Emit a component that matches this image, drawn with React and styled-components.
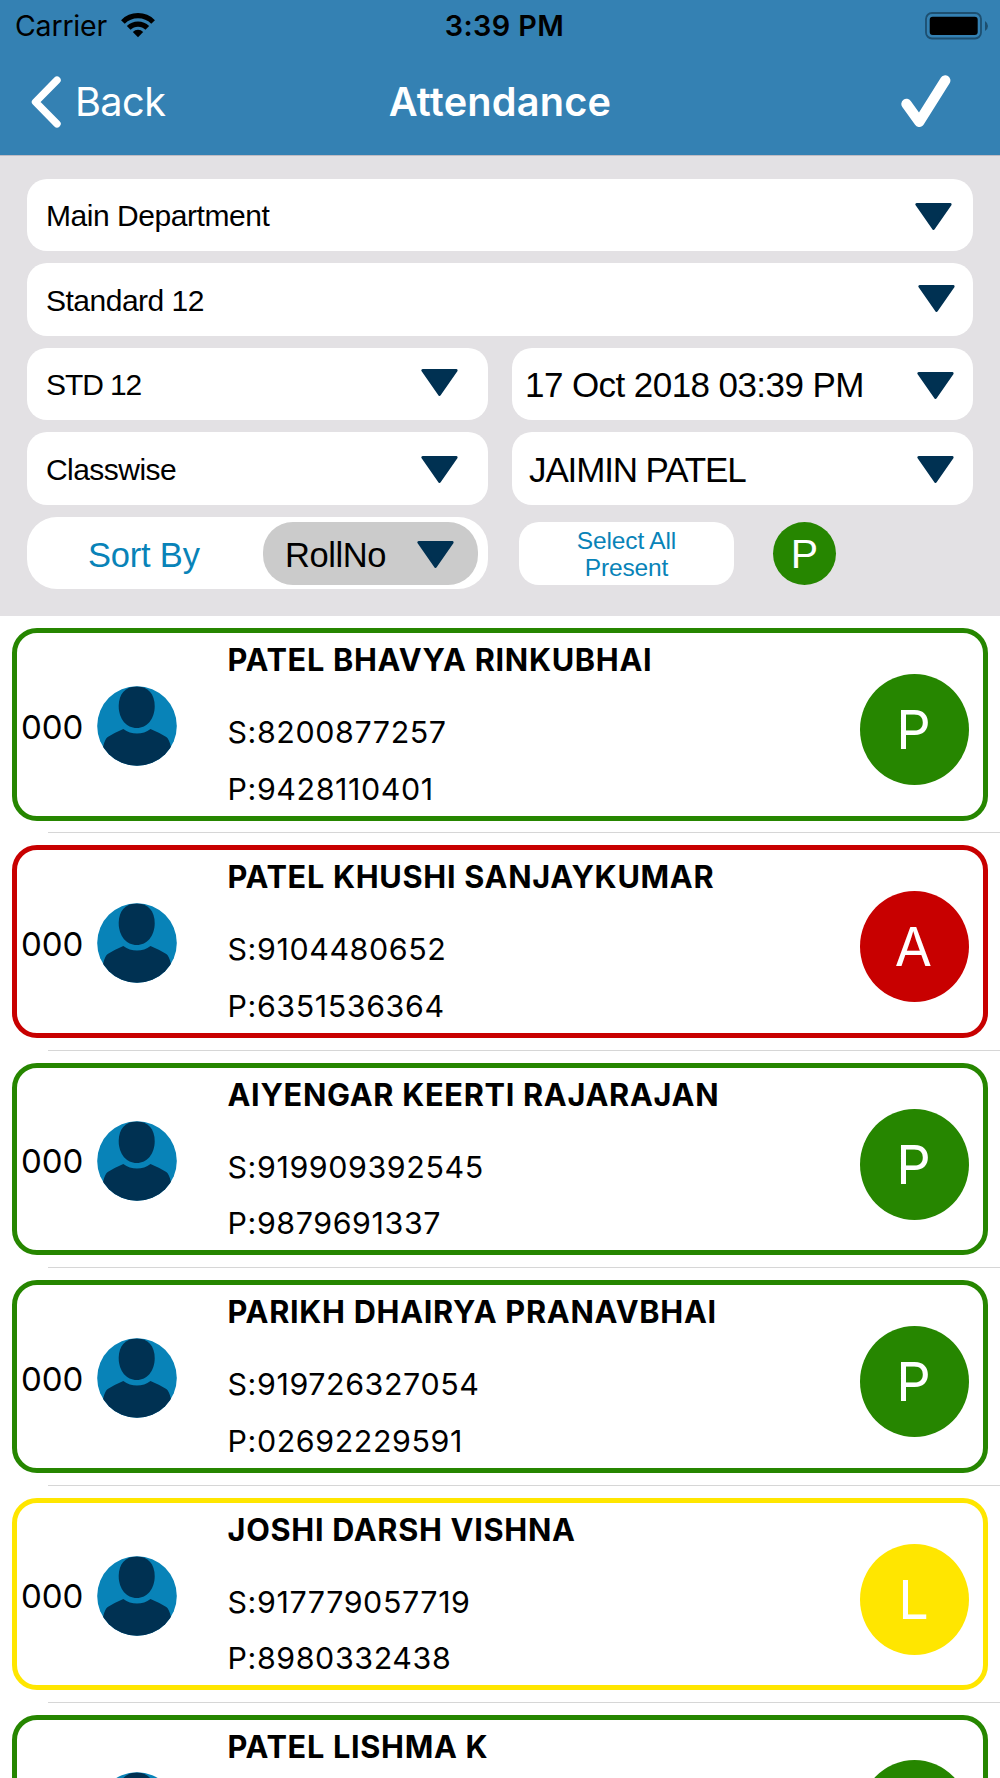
import React from "react";
import styled, { createGlobalStyle } from "styled-components";

const GREEN = `#268600`;
const RED = `#c80000`;
const YELLOW = `#ffe600`;
const NAVY = `#003152`;
const BLUE = `#0883b8`;

const GlobalStyle = createGlobalStyle`
  body {
    margin: 0;
    background: #fff;
  }

  * {
    box-sizing: border-box;
  }
`;

const Screen = styled.div`
  width: 1000px;
  height: 1778px;
  overflow: hidden;
  color: #000;
  background: #fff;
  font-family: Inter, sans-serif;
`;

const Header = styled.header`
  height: 156px;
  background: #3481b3;
  border-bottom: 1px solid #bfbcc4;
`;

const StatusBar = styled.div`
  height: 50px;
  padding: 0 12px 0 15px;
  display: grid;
  grid-template-columns: 1fr auto 1fr;
  align-items: center;
  line-height: 51px;
`;

const Carrier = styled.div`
  display: flex;
  align-items: center;
  gap: 14px;
  font-size: 28.5px;
  letter-spacing: -0.2px;
`;

const Clock = styled.div`
  font-size: 28.8px;
  font-weight: 600;
  letter-spacing: 0.4px;
  padding-left: 6px;
`;

const Battery = styled.svg`
  justify-self: end;
`;

const NavBar = styled.nav`
  height: 103px;
  padding: 0 49px 0 30px;
  display: grid;
  grid-template-columns: 1fr auto 1fr;
  align-items: center;
  color: #fff;
  font-size: 39.7px;
`;

const Back = styled.div`
  display: flex;
  align-items: center;
  gap: 13px;
  letter-spacing: -0.6px;
`;

const Title = styled.div`
  font-weight: 600;
  letter-spacing: 0.2px;
  padding-left: 19px;
`;

const CheckIcon = styled.svg`
  justify-self: end;
`;

const Filters = styled.section`
  height: 460px;
  padding: 23px 27px 0;
  display: grid;
  grid-template-columns: 461px 461px;
  grid-template-rows: repeat(5, 72.4px);
  gap: 12.1px 24px;
  background: #e3e1e4;
  font-family: "Liberation Sans", sans-serif;
`;

const Select = styled.div`
  grid-column: ${p => (p.$wide ? `1 / -1` : `auto`)};
  display: flex;
  align-items: center;
  justify-content: space-between;
  padding: 2px ${p => p.$right}px 0 ${p => p.$left}px;
  border-radius: 20px;
  background: #fff;
  font-size: ${p => p.$size}px;
  letter-spacing: ${p => p.$spacing}px;
  white-space: nowrap;
`;

const Arrow = styled.svg`
  flex: none;
  margin-top: ${p => p.$shift || 0}px;
`;

const SortBox = styled.div`
  display: flex;
  align-items: center;
  justify-content: space-between;
  padding: 0 10px 0 61px;
  border-radius: 30px;
  background: #fff;
  color: ${BLUE};
  font-size: 34.5px;
  letter-spacing: -0.2px;
  line-height: 42px;
`;

const SortLabel = styled.div`
  padding-top: 3px;
`;

const SortPill = styled.div`
  width: 215px;
  height: 63px;
  padding: 3px 24px 0 22px;
  display: flex;
  align-items: center;
  justify-content: space-between;
  border-radius: 30px;
  background: #cbcbcb;
  color: #000;
  letter-spacing: -0.4px;
`;

const BulkActions = styled.div`
  display: flex;
  align-items: center;
  gap: 39px;
  padding-left: 7px;
`;

const SelectAll = styled.div`
  width: 215px;
  height: 63px;
  padding: 5px 50px 0;
  border-radius: 20px;
  background: #fff;
  color: ${BLUE};
  font-size: 24.5px;
  letter-spacing: -0.15px;
  line-height: 27.5px;
  text-align: center;
`;

const PresentDot = styled.div`
  width: 63px;
  height: 63px;
  border-radius: 50%;
  background: ${GREEN};
  color: #fff;
  font-size: 41px;
  line-height: 65px;
  text-align: center;
`;

const Row = styled.div`
  height: 217.4px;
  padding: 12px 12px 0;
  background: linear-gradient(#d6d6d6, #d6d6d6) 48px 100% / 100% 1px no-repeat;
`;

const Card = styled.div`
  height: 192.5px;
  padding: 2px 14px 0 0;
  display: grid;
  grid-template-columns: 79.5px 80px 1fr 109px;
  align-items: center;
  border: 5px solid ${p => p.$color};
  border-radius: 25px;
`;

const RollNo = styled.div`
  padding: 1px 0 0 4px;
  font-size: 33px;
  letter-spacing: -0.1px;
`;

const Info = styled.div`
  align-self: start;
  padding: 5px 0 0 51px;
  font-size: 30.4px;
  letter-spacing: 0.6px;
  line-height: 56.6px;
  white-space: nowrap;
`;

const Name = styled.div`
  margin-bottom: 24px;
  font-size: 30.7px;
  font-weight: 700;
  letter-spacing: 0.7px;
  line-height: 40px;
`;

const Badge = styled.div`
  height: 111px;
  margin-top: 7px;
  border-radius: 50%;
  background: ${p => p.$color};
  color: #fff;
  font-size: 54px;
  line-height: 112px;
  text-align: center;
  text-indent: -2px;
`;

const Triangle = ({ shift }) => (
  <Arrow $shift={shift} width="37" height="27" viewBox="0 0 37 27">
    <path
      d="M1.8 1.5H35.2L18.5 25.5Z"
      fill={NAVY}
      stroke={NAVY}
      strokeWidth="2.8"
      strokeLinejoin="round"
    />
  </Arrow>
);

const Avatar = () => (
  <svg width="80" height="80" viewBox="0 0 80 80">
    <clipPath id="face">
      <circle cx="40" cy="40" r="39.8" />
    </clipPath>
    <g clipPath="url(#face)">
      <rect width="80" height="80" fill={BLUE} />
      <path
        d="M39.7 .5C51 .5 57.7 8 57.7 20C57.7 33 50 42 39.7 42S21.7 33 21.7 20C21.7 8 28.4 .5 39.7 .5Z"
        fill={NAVY}
      />
      <path
        d="M0 80L6.3 60Q8 53 10.7 51Q18 46.5 26.3 43Q32.5 47.6 40 47.6T53.5 43Q62 46.5 69.3 51Q72 53 73.7 60L80 80Z"
        fill={NAVY}
      />
    </g>
  </svg>
);

const students = [
  { name: `PATEL BHAVYA RINKUBHAI`, s: `8200877257`, p: `9428110401`, status: `P` },
  { name: `PATEL KHUSHI SANJAYKUMAR`, s: `9104480652`, p: `6351536364`, status: `A` },
  { name: `AIYENGAR KEERTI RAJARAJAN`, s: `919909392545`, p: `9879691337`, status: `P` },
  { name: `PARIKH DHAIRYA PRANAVBHAI`, s: `919726327054`, p: `02692229591`, status: `P` },
  { name: `JOSHI DARSH VISHNA`, s: `917779057719`, p: `8980332438`, status: `L` }
];

const statusColors = { P: GREEN, A: RED, L: YELLOW };

const Student = ({ name, s, p, status }) => (
  <Row>
    <Card $color={statusColors[status]}>
      <RollNo>{s && `000`}</RollNo>
      <Avatar />
      <Info>
        <Name>{name}</Name>
        {s && <div>S:{s}</div>}
        {p && <div>P:{p}</div>}
      </Info>
      <Badge $color={statusColors[status]}>{s && status}</Badge>
    </Card>
  </Row>
);

export default function App() {
  return (
    <Screen>
      <GlobalStyle />
      <Header>
        <StatusBar>
          <Carrier>
            Carrier
            <svg width="34" height="25" viewBox="0 0 34 25">
              <g fill="none" stroke="#000" strokeWidth="5.2">
                <path d="M1.9 9A21.3 21.3 0 0 1 32.1 9" />
                <path d="M7.7 14.9A13.1 13.1 0 0 1 26.3 14.9" />
              </g>
              <path d="M11.8 18.9A7.5 7.5 0 0 1 22.2 18.9L17 24.2Z" />
            </svg>
          </Carrier>
          <Clock>3:39 PM</Clock>
          <Battery width="63" height="28" viewBox="0 0 63 28">
            <rect x="1" y="1" width="55" height="25.5" rx="6" fill="none" stroke="#1d4f70" strokeWidth="1.8" />
            <rect x="4.7" y="4.7" width="48" height="18.3" rx="3" />
            <path d="M60 9Q63 11 63 14T60 19Z" fill="#1d4f70" />
          </Battery>
        </StatusBar>
        <NavBar>
          <Back>
            <svg width="32" height="52" viewBox="0 0 32 52">
              <path
                d="M27 4.2L5.5 26L27 47.8"
                fill="none"
                stroke="#fff"
                strokeWidth="7.4"
                strokeLinecap="round"
                strokeLinejoin="round"
              />
            </svg>
            Back
          </Back>
          <Title>Attendance</Title>
          <CheckIcon width="50" height="54" viewBox="0 0 50 54">
            <path
              d="M5.5 29L18.3 46.8L44.2 5.5"
              fill="none"
              stroke="#fff"
              strokeWidth="10.4"
              strokeLinecap="round"
              strokeLinejoin="round"
            />
          </CheckIcon>
        </NavBar>
      </Header>
      <Filters>
        <Select $wide $size={30} $spacing={-0.45} $left={19} $right={21}>
          Main Department
          <Triangle />
        </Select>
        <Select $wide $size={30} $spacing={-0.5} $left={19} $right={18.5}>
          Standard 12
          <Triangle shift={-5} />
        </Select>
        <Select $size={30} $spacing={-1.1} $left={19} $right={30}>
          STD 12
          <Triangle shift={-5} />
        </Select>
        <Select $size={35} $spacing={-0.57} $left={13} $right={19.5}>
          17 Oct 2018 03:39 PM
          <Triangle shift={1} />
        </Select>
        <Select $size={30} $spacing={-0.55} $left={19} $right={30}>
          Classwise
          <Triangle />
        </Select>
        <Select $size={35} $spacing={-1.12} $left={17} $right={19.5}>
          JAIMIN PATEL
          <Triangle />
        </Select>
        <SortBox>
          <SortLabel>Sort By</SortLabel>
          <SortPill>
            RollNo
            <Triangle />
          </SortPill>
        </SortBox>
        <BulkActions>
          <SelectAll>Select All Present</SelectAll>
          <PresentDot>P</PresentDot>
        </BulkActions>
      </Filters>
      {students.map(student => (
        <Student key={student.name} {...student} />
      ))}
      <Student name="PATEL LISHMA K" status="P" />
    </Screen>
  );
}
